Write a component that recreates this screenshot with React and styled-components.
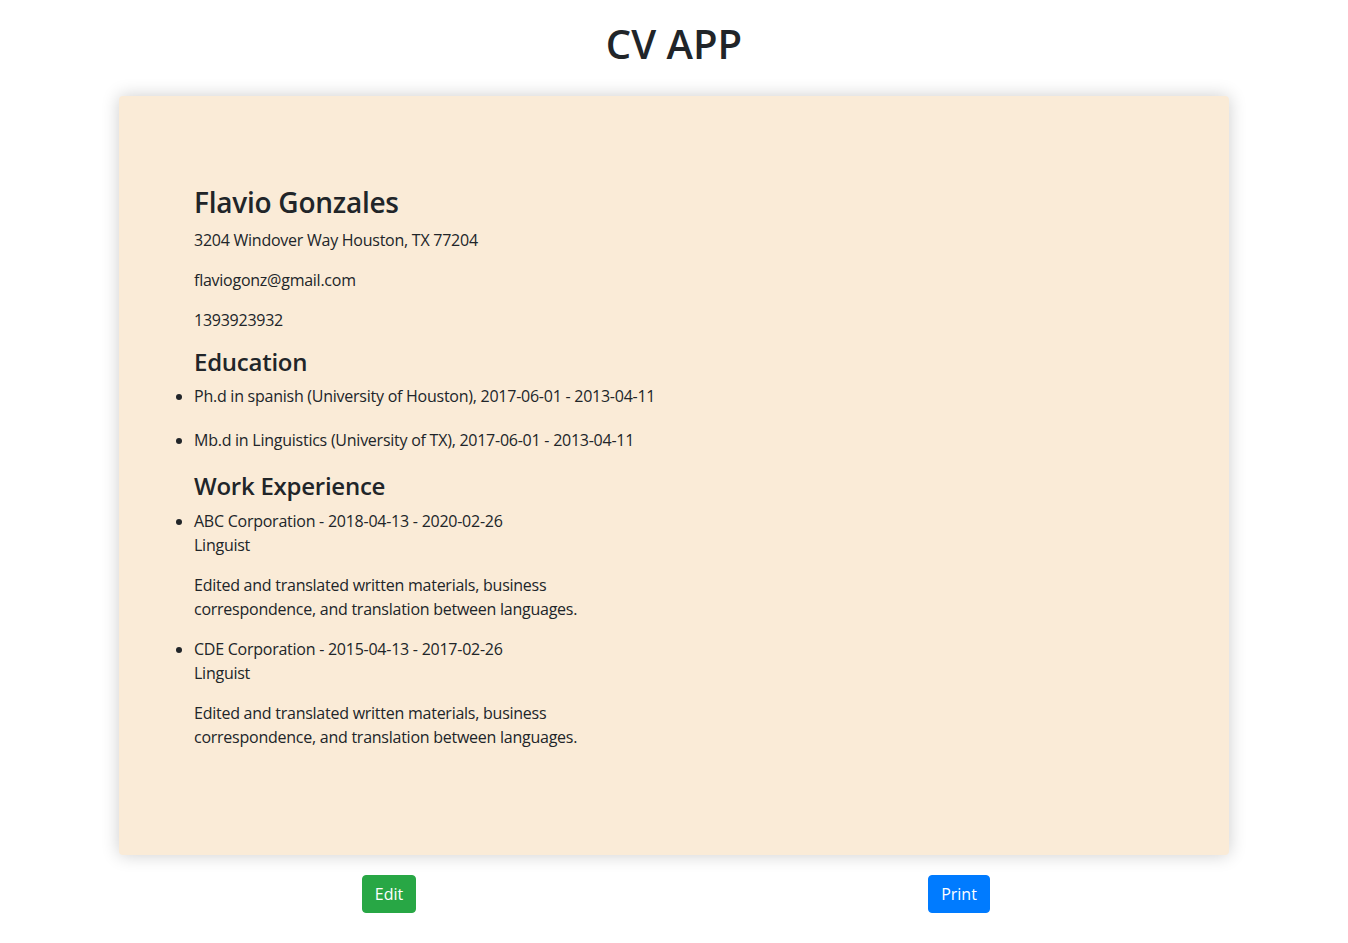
import React from 'react';
import styled, { createGlobalStyle } from 'styled-components';

const GlobalStyle = createGlobalStyle`
  body {
    margin: 0;
    font-family: "Open Sans", "Liberation Sans", sans-serif;
    font-size: 16px;
    line-height: 1.5;
    color: #212529;
    background: #fff;
  }
  * { box-sizing: border-box; }
`;

const cv = {
  name: 'Flavio Gonzales',
  address: '3204 Windover Way Houston, TX 77204',
  email: 'flaviogonz@gmail.com',
  phone: '1393923932',
  education: [
    { degree: 'Ph.d in spanish', school: 'University of Houston', from: '2017-06-01', to: '2013-04-11' },
    { degree: 'Mb.d in Linguistics', school: 'University of TX', from: '2017-06-01', to: '2013-04-11' },
  ],
  work: [
    {
      company: 'ABC Corporation', from: '2018-04-13', to: '2020-02-26', role: 'Linguist',
      description: 'Edited and translated written materials, business correspondence, and translation between languages.',
    },
    {
      company: 'CDE Corporation', from: '2015-04-13', to: '2017-02-26', role: 'Linguist',
      description: 'Edited and translated written materials, business correspondence, and translation between languages.',
    },
  ],
};

const Container = styled.div`
  width: 1140px;
  margin: 0 auto;
  padding: 0 15px 30px;
`;

const Title = styled.h1`
  margin: 20px 0 28px;
  font-size: 40px;
  font-weight: 600;
  line-height: 1.2;
  text-align: center;
`;

const Sheet = styled.div`
  background-color: antiquewhite;
  border-radius: 4px;
  box-shadow: 0 0 18px rgba(0, 0, 0, 0.2);
  padding: 90px 75px;
  letter-spacing: -0.25px;
`;

const Name = styled.h3`
  margin: 0 0 8px;
  font-size: 28px;
  font-weight: 600;
  line-height: 1.2;
`;

const Section = styled.h4`
  margin: 0 0 8px;
  font-size: 24px;
  font-weight: 600;
  line-height: 1.2;
`;

const Text = styled.p`
  margin: 0 0 16px;
  max-width: ${(p) => (p.$narrow ? '400px' : 'none')};
`;

const List = styled.ul`
  margin: 0;
  padding: 0;
`;

const Item = styled.li`
  margin-bottom: ${(p) => (p.$gap ? '20px' : '0')};
  & > p { margin-bottom: ${(p) => (p.$gap ? '0' : '16px')}; }
`;

const Actions = styled.div`
  display: grid;
  grid-template-columns: 1fr 1fr;
  margin: 20px -15px 0;
  justify-items: center;
`;

const Button = styled.button`
  font-family: inherit;
  font-size: 16px;
  line-height: 1.5;
  padding: 6px 12px;
  border: 1px solid ${(p) => p.$color};
  border-radius: 4px;
  background-color: ${(p) => p.$color};
  color: #fff;
  cursor: pointer;
`;

export default function App() {
  return (
    <Container>
      <GlobalStyle />
      <Title>CV APP</Title>
      <Sheet>
        <Name>{cv.name}</Name>
        <Text>{cv.address}</Text>
        <Text>{cv.email}</Text>
        <Text>{cv.phone}</Text>

        <Section>Education</Section>
        <List>
          {cv.education.map((ed, i) => (
            <Item key={i} $gap>
              <Text>{ed.degree} ({ed.school}), {ed.from} - {ed.to}</Text>
            </Item>
          ))}
        </List>

        <Section>Work Experience</Section>
        <List>
          {cv.work.map((job, i) => (
            <Item key={i}>
              <Text>
                {job.company} - {job.from} - {job.to}
                <br />
                {job.role}
              </Text>
              <Text $narrow>{job.description}</Text>
            </Item>
          ))}
        </List>
      </Sheet>
      <Actions>
        <Button $color="#28a745">Edit</Button>
        <Button $color="#007bff">Print</Button>
      </Actions>
    </Container>
  );
}
